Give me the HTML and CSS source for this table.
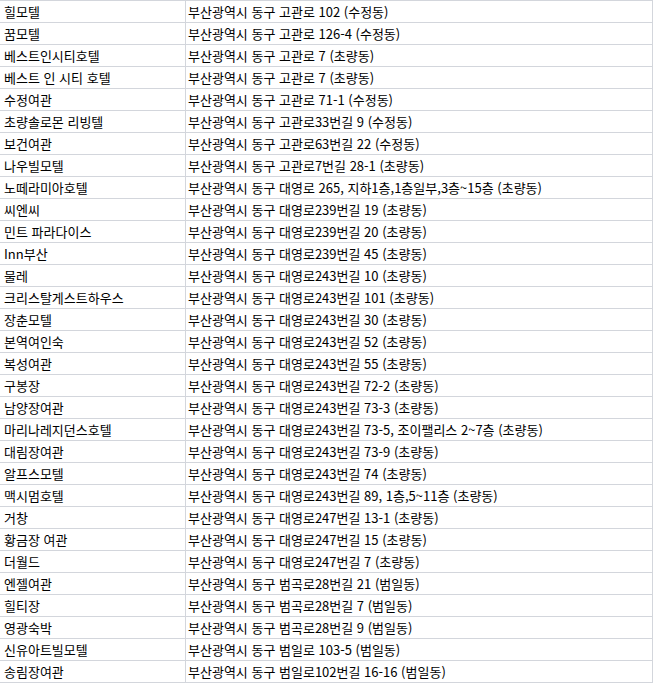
FILE: index.html
```html
<!DOCTYPE html>
<html lang="ko">
<head>
<meta charset="utf-8">
<title>숙박업소 목록</title>
<link rel="stylesheet" href="styles.css">
</head>
<body>
<table class="sheet">
<colgroup><col class="c-name"><col class="c-addr"></colgroup>
<tbody>
<tr><td>힐모텔</td><td>부산광역시 동구 고관로 102 (수정동)</td></tr>
<tr><td>꿈모텔</td><td>부산광역시 동구 고관로 126-4 (수정동)</td></tr>
<tr><td>베스트인시티호텔</td><td>부산광역시 동구 고관로 7 (초량동)</td></tr>
<tr><td>베스트 인 시티 호텔</td><td>부산광역시 동구 고관로 7 (초량동)</td></tr>
<tr><td>수정여관</td><td>부산광역시 동구 고관로 71-1 (수정동)</td></tr>
<tr><td>초량솔로몬 리빙텔</td><td>부산광역시 동구 고관로33번길 9 (수정동)</td></tr>
<tr><td>보건여관</td><td>부산광역시 동구 고관로63번길 22 (수정동)</td></tr>
<tr><td>나우빌모텔</td><td>부산광역시 동구 고관로7번길 28-1 (초량동)</td></tr>
<tr><td>노떼라미아호텔</td><td>부산광역시 동구 대영로 265, 지하1층,1층일부,3층~15층 (초량동)</td></tr>
<tr><td>씨엔씨</td><td>부산광역시 동구 대영로239번길 19 (초량동)</td></tr>
<tr><td>민트 파라다이스</td><td>부산광역시 동구 대영로239번길 20 (초량동)</td></tr>
<tr><td>Inn부산</td><td>부산광역시 동구 대영로239번길 45 (초량동)</td></tr>
<tr><td>물레</td><td>부산광역시 동구 대영로243번길 10 (초량동)</td></tr>
<tr><td>크리스탈게스트하우스</td><td>부산광역시 동구 대영로243번길 101 (초량동)</td></tr>
<tr><td>장춘모텔</td><td>부산광역시 동구 대영로243번길 30 (초량동)</td></tr>
<tr><td>본역여인숙</td><td>부산광역시 동구 대영로243번길 52 (초량동)</td></tr>
<tr><td>복성여관</td><td>부산광역시 동구 대영로243번길 55 (초량동)</td></tr>
<tr><td>구봉장</td><td>부산광역시 동구 대영로243번길 72-2 (초량동)</td></tr>
<tr><td>남양장여관</td><td>부산광역시 동구 대영로243번길 73-3 (초량동)</td></tr>
<tr><td>마리나레지던스호텔</td><td>부산광역시 동구 대영로243번길 73-5, 조이팰리스 2~7층 (초량동)</td></tr>
<tr><td>대림장여관</td><td>부산광역시 동구 대영로243번길 73-9 (초량동)</td></tr>
<tr><td>알프스모텔</td><td>부산광역시 동구 대영로243번길 74 (초량동)</td></tr>
<tr><td>맥시멈호텔</td><td>부산광역시 동구 대영로243번길 89, 1층,5~11층 (초량동)</td></tr>
<tr><td>거창</td><td>부산광역시 동구 대영로247번길 13-1 (초량동)</td></tr>
<tr><td>황금장 여관</td><td>부산광역시 동구 대영로247번길 15 (초량동)</td></tr>
<tr><td>더월드</td><td>부산광역시 동구 대영로247번길 7 (초량동)</td></tr>
<tr><td>엔젤여관</td><td>부산광역시 동구 범곡로28번길 21 (범일동)</td></tr>
<tr><td>힐티장</td><td>부산광역시 동구 범곡로28번길 7 (범일동)</td></tr>
<tr><td>영광숙박</td><td>부산광역시 동구 범곡로28번길 9 (범일동)</td></tr>
<tr><td>신유아트빌모텔</td><td>부산광역시 동구 범일로 103-5 (범일동)</td></tr>
<tr><td>송림장여관</td><td>부산광역시 동구 범일로102번길 16-16 (범일동)</td></tr>
</tbody>
</table>
</body>
</html>
```
FILE: styles.css
```css
html, body {
  margin: 0;
  padding: 0;
  background: #ffffff;
}
body {
  font-family: "Noto Sans CJK KR", "Noto Sans", sans-serif;
  font-size: 13px;
  color: #000000;
  overflow: hidden;
}
.sheet {
  border-collapse: collapse;
  table-layout: fixed;
  width: 654px;
  margin-left: -1px;
}
.c-name { width: 186px; }
.c-addr { width: 467px; }
.sheet td {
  border: 1px solid #d3d6dc;
  height: 21px;
  padding: 0 3px 0 4px;
  line-height: 21px;
  white-space: nowrap;
  overflow: hidden;
  box-sizing: border-box;
}
.sheet td + td {
  padding-left: 2px;
}
```
